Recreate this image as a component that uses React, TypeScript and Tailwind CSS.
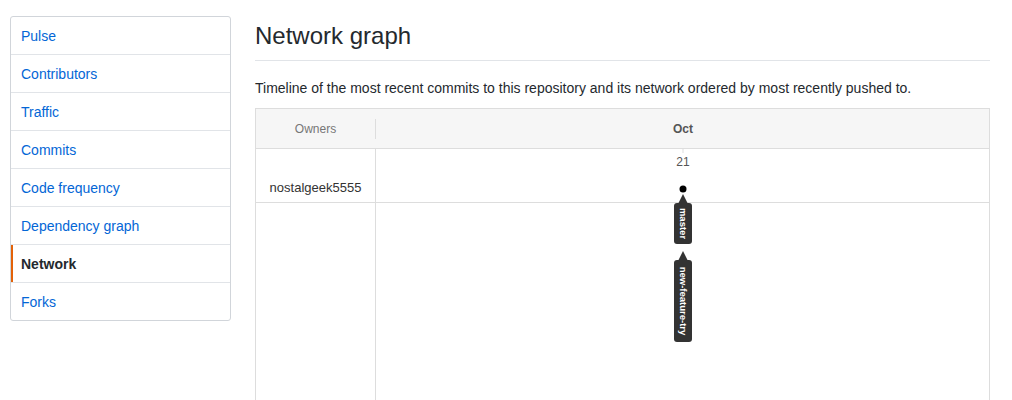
import React from 'react';

const menuItems = [
  'Pulse',
  'Contributors',
  'Traffic',
  'Commits',
  'Code frequency',
  'Dependency graph',
  'Network',
  'Forks',
];

function Sidebar({ selected }: { selected: string }) {
  return (
    <nav className="w-[221px] shrink-0 overflow-hidden rounded-[3px] border border-[#d1d5da] bg-white">
      {menuItems.map((item, i) => {
        const active = item === selected;
        return (
          <a
            key={item}
            href="#"
            className={
              'relative block px-[10px] pt-[9px] pb-[7px] text-sm leading-[21px] ' +
              (i > 0 ? 'border-t border-[#e1e4e8] ' : '') +
              (active ? 'font-semibold text-[#24292e]' : 'text-[#0366d6]')
            }
          >
            {active && <span className="absolute top-0 bottom-0 left-0 w-[2px] bg-[#e36209]" />}
            {item}
          </a>
        );
      })}
    </nav>
  );
}

function BranchLabel({ x, y, height, name }: { x: number; y: number; height: number; name: string }) {
  // y is the tip of the arrow
  return (
    <g>
      <polygon points={`${x},${y} ${x - 5},${y + 10} ${x + 5},${y + 10}`} fill="#333" />
      <rect x={x - 9} y={y + 9} width={18} height={height} rx={3} fill="#333" />
      <text
        x={0}
        y={0}
        transform={`translate(${x - 3.5} ${y + 9 + height / 2}) rotate(90)`}
        textAnchor="middle"
        fill="#fff"
        fontSize={9.5}
        fontWeight="bold"
        fontFamily="'Liberation Sans', Arial, sans-serif"
      >
        {name}
      </text>
    </g>
  );
}

function NetworkGraph() {
  return (
    <div
      className="flex h-[400px] flex-col border border-[#ddd] bg-white"
      style={{ fontFamily: "'Liberation Sans', Arial, sans-serif" }}
    >
      <div className="flex h-10 shrink-0 items-center border-b border-[#ddd] bg-[#f6f6f6]">
        <div className="flex h-5 w-[120px] items-center justify-center border-r border-[#ddd] text-xs text-[#777]">
          Owners
        </div>
        <div className="flex-1 pl-[307px] text-xs">
          <span className="inline-block -translate-x-1/2 font-bold text-[#555]">Oct</span>
        </div>
      </div>
      <div className="relative flex-1">
        <div className="flex h-[54px] border-b border-[#ddd]">
          <div className="flex w-[120px] items-end justify-center border-r border-[#ddd] pb-[5px] text-[13px] text-[#333]">
            nostalgeek5555
          </div>
        </div>
        <div className="flex h-full">
          <div className="w-[120px] border-r border-[#ddd]" />
        </div>
        <svg className="absolute top-0 left-0" width={733} height={260}>
          <line x1={427} y1={0} x2={427} y2={4} stroke="#ddd" strokeWidth={1} />
          <text
            x={427}
            y={17}
            textAnchor="middle"
            fontSize={12}
            fill="#555"
            fontFamily="'Liberation Sans', Arial, sans-serif"
          >
            21
          </text>
          <circle cx={427} cy={40} r={3.5} fill="#000" />
          <BranchLabel x={427} y={45} height={41} name="master" />
          <BranchLabel x={427} y={102} height={82} name="new-feature-try" />
        </svg>
      </div>
    </div>
  );
}

export default function App() {
  return (
    <div
      className="flex h-[400px] items-start gap-6 overflow-hidden bg-white pt-4 pl-[10px] text-[#24292e]"
      style={{ fontFamily: "'Segoe UI', 'Liberation Sans', Arial, sans-serif" }}
    >
      <Sidebar selected="Network" />
      <main className="w-[735px] shrink-0">
        <div className="mb-[17px] border-b border-[#e1e4e8] pt-[2px] pb-[6px]">
          <h2 className="text-2xl leading-9 font-normal">Network graph</h2>
        </div>
        <p className="mb-[9px] text-sm leading-[21px]">
          Timeline of the most recent commits to this repository and its network ordered by most recently pushed to.
        </p>
        <NetworkGraph />
      </main>
    </div>
  );
}
